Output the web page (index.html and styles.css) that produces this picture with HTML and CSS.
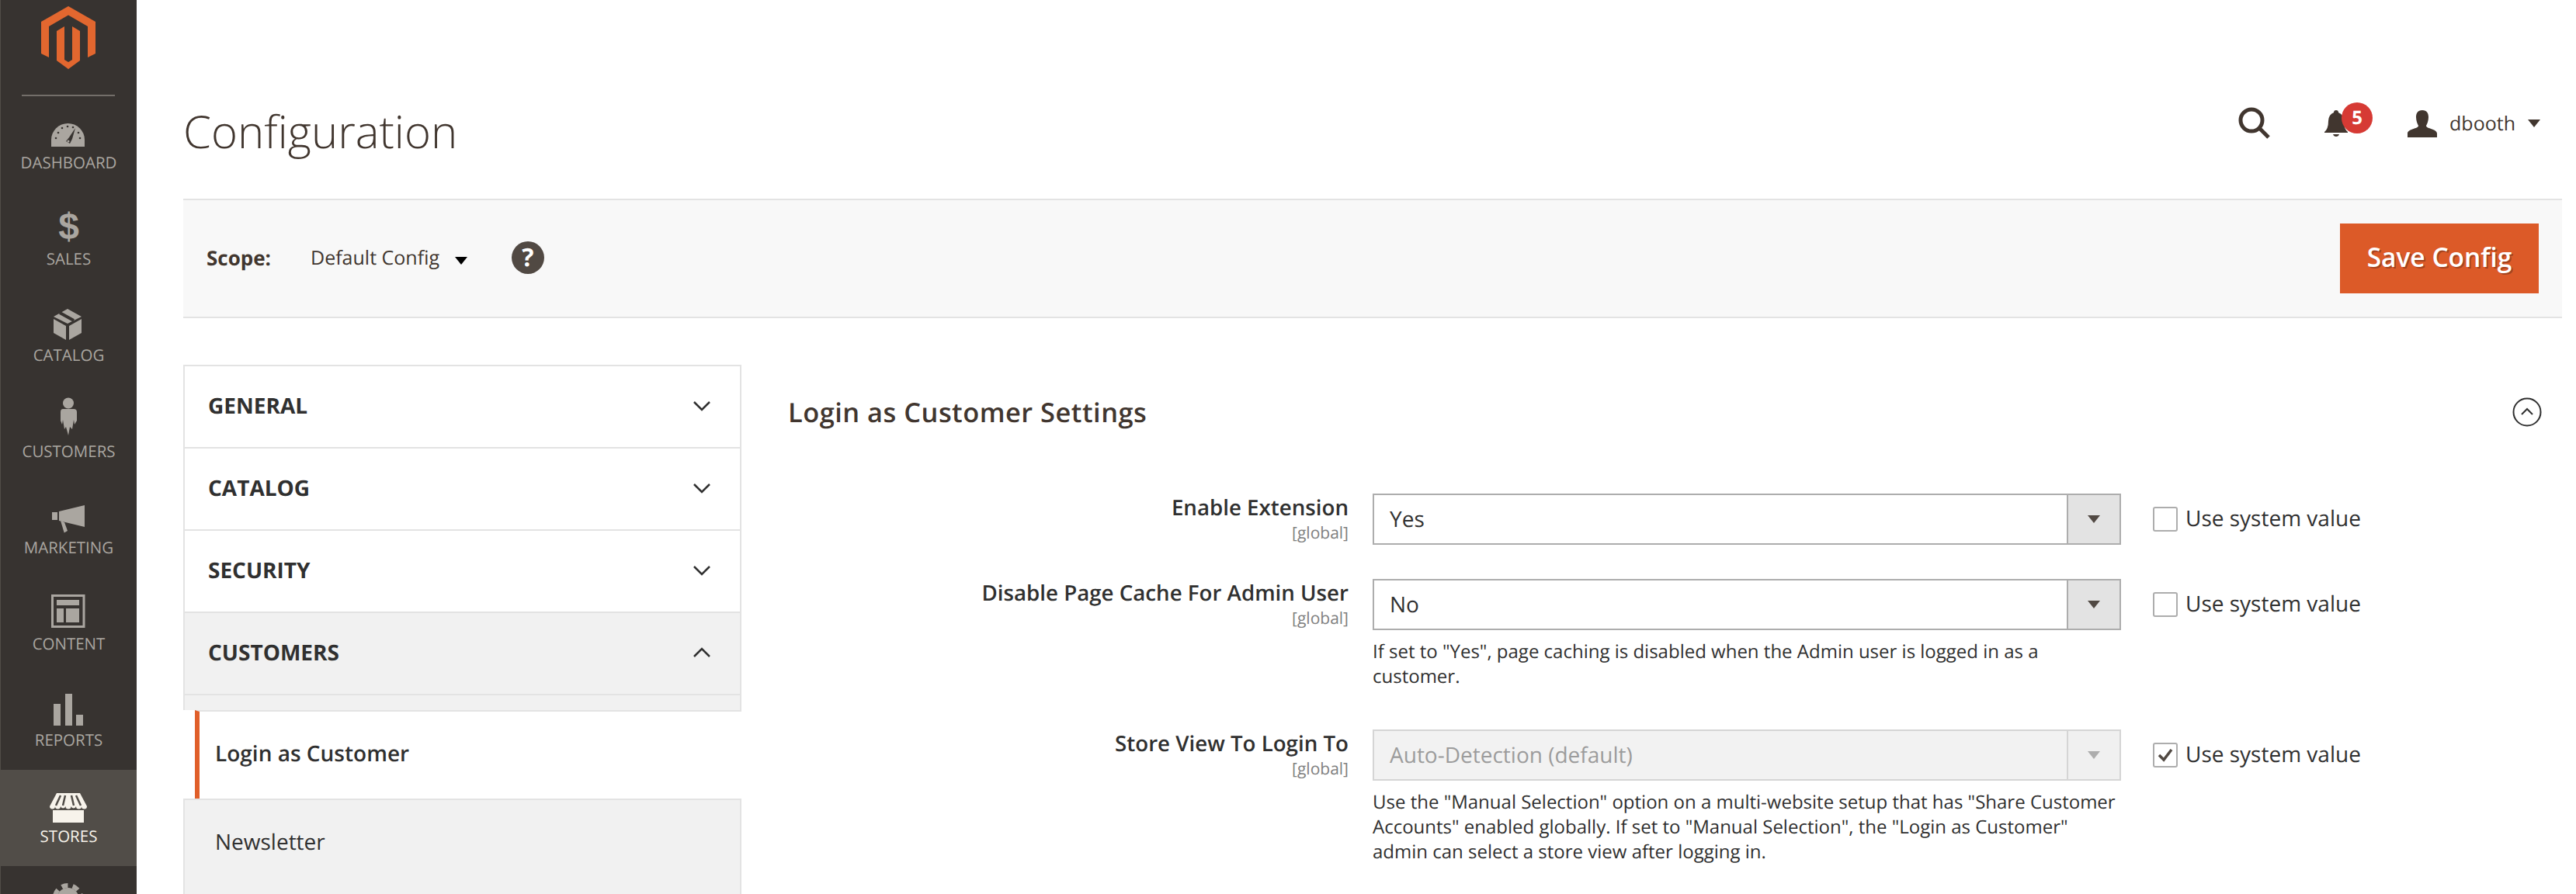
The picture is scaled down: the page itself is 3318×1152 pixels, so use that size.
FILE: index.html
```html
<!DOCTYPE html>
<html lang="en">
<head>
    <meta charset="UTF-8">
    <meta name="viewport" content="width=device-width, initial-scale=1.0">
    <title>Configuration</title>
    <link rel="stylesheet" href="styles.css">
</head>
<body>
    <div class="shell">
        <nav class="sidebar">
            <div class="logo-box">
                <svg class="logo" width="70" height="81" viewBox="0 0 70 81">
                    <path d="M35 0L70 20V61L60 66V26L35 11.5L10 26V66L0 61V20Z"/>
                    <path d="M20 32L30 26V69L35 72L40 69V26L50 32V70L35 81L20 70Z"/>
                </svg>
            </div>
            <a class="nav-item">
                <svg width="48" height="60" viewBox="0 0 48 60">
                    <path d="M2 57V48A21.5 21 0 0 1 45 48V57Z"/>
                    <g class="cut">
                        <circle cx="8" cy="46" r="1.3"/><circle cx="11" cy="39" r="1.3"/><circle cx="16" cy="33" r="1.3"/>
                        <circle cx="23" cy="31" r="1.3"/><circle cx="30" cy="32" r="1.3"/><circle cx="39" cy="46" r="1.3"/><circle cx="37" cy="39" r="1.3"/>
                        <path d="M33 33L25 45L21 50L26 53L29 47Z"/>
                    </g>
                    <circle cx="24" cy="50" r="1.5"/>
                </svg>
                <span>Dashboard</span>
            </a>
            <a class="nav-item">
                <b class="dollar">$</b>
                <span>Sales</span>
            </a>
            <a class="nav-item">
                <svg width="48" height="60" viewBox="0 0 48 60">
                    <path d="M23 18L41 28L23 37L5 28Z"/>
                    <path class="cut-line" d="M13 23L31 33"/>
                    <path d="M5 31L21 40V58L5 49Z"/>
                    <path d="M25 40L41 31V49L25 58Z"/>
                </svg>
                <span>Catalog</span>
            </a>
            <a class="nav-item">
                <svg width="48" height="60" viewBox="0 0 48 60">
                    <circle cx="24" cy="15.5" r="7"/>
                    <path d="M17 23H31Q35 23 35 27V38L32 43L31 37L29 49L26 46L24 57L21 46L19 49L17 37L16 43L14 38V27Q14 23 17 23Z"/>
                </svg>
                <span>Customers</span>
            </a>
            <a class="nav-item">
                <svg width="48" height="60" viewBox="0 0 48 60">
                    <path d="M3 32H10V42H3Z"/>
                    <path d="M12 31L45 23V51L12 43Z"/>
                    <path d="M14 43L19 45L23 56L18.7 58.5Z"/>
                </svg>
                <span>Marketing</span>
            </a>
            <a class="nav-item">
                <svg width="48" height="60" viewBox="0 0 48 60">
                    <path class="frame" d="M3.5 15.5H44V55.5H3.5Z"/>
                    <path d="M9 21H38V28H9Z"/>
                    <path d="M9 32H18V50H9Z"/>
                    <path d="M21 32H38V50H21Z"/>
                </svg>
                <span>Content</span>
            </a>
            <a class="nav-item">
                <svg width="48" height="60" viewBox="0 0 48 60">
                    <path d="M5 31H14V59H5Z"/>
                    <path d="M20 18H29V59H20Z"/>
                    <path d="M34 45H43V59H34Z"/>
                </svg>
                <span>Reports</span>
            </a>
            <a class="nav-item active">
                <svg width="48" height="60" viewBox="0 0 48 60">
                    <path d="M4 44H44V61H4Z"/>
                    <path d="M9 22H39L48 39A3.4 3.4 0 0 1 41 39A3.4 3.4 0 0 1 34 39A3.4 3.4 0 0 1 27.500 39A3.400 3.400 0 0 1 20.500 39A3.400 3.400 0 0 1 14 39A3.400 3.400 0 0 1 7 39A3.400 3.400 0 0 1 0 39Z"/>
                    <path class="store-line" d="M14 25L8 38M20 25L17 38M28 25L31 38M34 25L40 38"/>
                </svg>
                <span>Stores</span>
            </a>
            <a class="nav-item">
                <svg width="48" height="60" viewBox="0 0 48 60">
                    <circle class="gear" cx="23.500" cy="34" r="14"/>
                    <circle class="gear-teeth" cx="23.500" cy="34" r="17"/>
                </svg>
            </a>
        </nav>

        <main class="page">
            <header class="page-header">
                <h1>Configuration</h1>
                <div class="actions">
                    <svg class="search-icon" width="42" height="42" viewBox="0 0 42 42">
                        <circle cx="17" cy="17" r="14"/>
                        <path d="M27 27L39 39"/>
                    </svg>
                    <div class="bell">
                        <svg width="30" height="34" viewBox="0 0 30 34">
                            <path d="M15 0Q18 0 18 3Q25 6 25 14Q25 24 30 28V29H0V28Q5 24 5 14Q5 6 12 3Q12 0 15 0Z"/>
                            <path d="M11 31H19Q18 34 15 34Q12 34 11 31Z"/>
                        </svg>
                        <span class="badge">5</span>
                    </div>
                    <svg class="user-icon" width="38" height="35" viewBox="0 0 38 35">
                        <path d="M19 0C25 0 27 4 27 9C27 14 25 18 24 20C24 24 38 24 38 30V35H0V30C0 24 14 24 14 20C13 18 11 14 11 9C11 4 13 0 19 0Z"/>
                    </svg>
                    <span class="username">dbooth</span>
                    <i class="caret dark"></i>
                </div>
            </header>

            <div class="toolbar">
                <b class="scope-label">Scope:</b>
                <span class="scope-value">Default Config</span>
                <i class="caret black"></i>
                <span class="help">?</span>
                <button class="save">Save Config</button>
            </div>

            <div class="columns">
                <aside class="tabs">
                    <div class="tab">General <svg class="chev" width="24" height="14" viewBox="0 0 24 14"><path d="M2 2L12 12L22 2"/></svg></div>
                    <div class="tab">Catalog <svg class="chev" width="24" height="14" viewBox="0 0 24 14"><path d="M2 2L12 12L22 2"/></svg></div>
                    <div class="tab">Security <svg class="chev" width="24" height="14" viewBox="0 0 24 14"><path d="M2 2L12 12L22 2"/></svg></div>
                    <div class="tab open">Customers <svg class="chev" width="24" height="14" viewBox="0 0 24 14"><path d="M2 12L12 2L22 12"/></svg></div>
                    <div class="tab-gap"></div>
                    <div class="sub-tab current">Login as Customer</div>
                    <div class="sub-tab">Newsletter</div>
                </aside>

                <section class="settings">
                    <div class="section-head">
                        <h2>Login as Customer Settings</h2>
                        <svg class="collapse" width="38" height="38" viewBox="0 0 38 38">
                            <circle cx="19" cy="19" r="17.500"/>
                            <path d="M12 22L19 15L26 22"/>
                        </svg>
                    </div>

                    <div class="form-row">
                        <div class="label">Enable Extension<small>[global]</small></div>
                        <div class="field">
                            <div class="select"><span>Yes</span><em><i></i></em></div>
                        </div>
                        <label class="use-system"><i class="check"></i>Use system value</label>
                    </div>

                    <div class="form-row">
                        <div class="label">Disable Page Cache For Admin User<small>[global]</small></div>
                        <div class="field">
                            <div class="select"><span>No</span><em><i></i></em></div>
                            <p class="note">If set to "Yes", page caching is disabled when the Admin user is logged in as a<br>customer.</p>
                        </div>
                        <label class="use-system"><i class="check"></i>Use system value</label>
                    </div>

                    <div class="form-row">
                        <div class="label">Store View To Login To<small>[global]</small></div>
                        <div class="field">
                            <div class="select disabled"><span>Auto-Detection (default)</span><em><i></i></em></div>
                            <p class="note">Use the "Manual Selection" option on a multi-website setup that has "Share Customer<br>Accounts" enabled globally. If set to "Manual Selection", the "Login as Customer"<br>admin can select a store view after logging in.</p>
                        </div>
                        <label class="use-system">
                            <i class="check"><svg width="22" height="20" viewBox="0 0 22 20"><path d="M3 10L9 16L19 3"/></svg></i>Use system value
                        </label>
                    </div>
                </section>
            </div>
        </main>
    </div>
</body>
</html>
```

FILE: styles.css
```css
html, body {
    margin: 0;
    height: 1152px;
    overflow: hidden;
    background: #fff;
    font-family: "Open Sans", sans-serif;
    color: #303030;
    text-rendering: geometricPrecision;
}
.shell {
    display: flex;
    height: 1152px;
    overflow: hidden;
}

/* left menu */
.sidebar {
    width: 176px;
    flex: none;
    background: #373330;
    color: #aaa6a0;
    box-sizing: border-box;
    height: 1240px;
    border-left: 1px solid #514d48;
}
.logo-box {
    height: 124px;
    margin: 0 28px 0 27px;
    box-sizing: border-box;
    padding-top: 8px;
    border-bottom: 2px solid #736e69;
    display: flex;
    justify-content: center;
}
.logo {
    fill: #e2672f;
    flex: none;
}
.nav-item {
    display: block;
    height: 124px;
    padding-top: 8px;
    box-sizing: border-box;
    text-align: center;
    font-size: 20.5px;
    line-height: 28px;
    text-transform: uppercase;
}
.nav-item svg {
    display: block;
    margin: 0 0 4px 63px;
    fill: #aaa6a0;
}
.nav-item span {
    display: block;
}
.nav-item.active {
    background: #514d48;
    color: #f7f3eb;
}
.nav-item.active svg {
    fill: #f7f3eb;
}
.cut {
    fill: #373330;
}
.cut-line {
    stroke: #373330;
    stroke-width: 4;
    fill: none;
}
.frame {
    fill: none;
    stroke: #aaa6a0;
    stroke-width: 3;
}
.store-line {
    fill: none;
    stroke: #514d48;
    stroke-width: 2.500;
}
.dollar {
    display: block;
    height: 60px;
    margin-bottom: 4px;
    box-sizing: border-box;
    padding-top: 14px;
    font-family: "Liberation Sans", sans-serif;
    font-weight: 700;
    font-size: 48px;
    line-height: 46px;
}
.gear {
    fill: #aaa6a0;
}
.gear-teeth {
    fill: none;
    stroke: #aaa6a0;
    stroke-width: 6;
    stroke-dasharray: 8 6.300;
}

/* page */
.page {
    flex: 1;
    min-width: 0;
    padding: 0 18px 0 60px;
}
.page-header {
    height: 256px;
    box-sizing: border-box;
    padding: 80px 0 0;
    display: flex;
    align-items: center;
    justify-content: space-between;
}
h1 {
    margin: 0;
    font-size: 58px;
    font-weight: 300;
    color: #41362f;
}
.actions {
    display: flex;
    align-items: center;
    margin: 0 28px 18px 0;
    color: #41362f;
}
.search-icon {
    fill: none;
    stroke: #41362f;
    stroke-width: 5;
    margin-right: 69px;
}
.bell {
    position: relative;
    width: 30px;
    height: 34px;
    margin-right: 77px;
    fill: #41362f;
}
.bell svg {
    display: block;
}
.badge {
    position: absolute;
    left: 22px;
    top: -10px;
    width: 40px;
    height: 40px;
    border-radius: 50%;
    background: #d63a34;
    color: #fff;
    font-size: 24px;
    font-weight: 700;
    line-height: 40px;
    text-align: center;
}
.user-icon {
    fill: #41362f;
    margin-right: 16px;
}
.username {
    font-size: 25px;
    margin-right: 16px;
}
.caret {
    display: block;
    border-style: solid;
    border-width: 10px 8px 0;
    border-color: #41362f transparent transparent;
}
.caret.black {
    border-color: #000 transparent transparent;
    margin-top: 6px;
}

/* scope bar */
.toolbar {
    height: 154px;
    box-sizing: border-box;
    padding: 0 30px;
    background: #f8f8f8;
    border-top: 2px solid #e3e3e3;
    border-bottom: 2px solid #e3e3e3;
    display: flex;
    align-items: center;
    font-size: 25px;
    color: #41362f;
}
.scope-label {
    font-size: 26px;
    font-weight: 700;
    margin-right: 51px;
    padding-bottom: 2px;
}
.scope-value {
    margin-right: 20px;
    padding-bottom: 2px;
}
.help {
    width: 42px;
    height: 42px;
    border-radius: 50%;
    background: #514943;
    color: #fff;
    margin: 0 0 2px 57px;
    font-size: 32px;
    font-weight: 700;
    line-height: 42px;
    text-align: center;
}
.save {
    margin-left: auto;
    width: 256px;
    height: 90px;
    padding: 0 0 4px;
    border: none;
    background: #dc5a28;
    color: #fff;
    font-family: inherit;
    font-size: 33.500px;
    font-weight: 600;
    text-shadow: 2px 2px 0 rgba(0, 0, 0, 0.25);
}

/* columns */
.columns {
    display: flex;
    margin-top: 60px;
}
.tabs {
    width: 719px;
    flex: none;
    margin-right: 60px;
    color: #303030;
}
.tab {
    height: 106px;
    box-sizing: border-box;
    padding: 0 37px 2px 30px;
    border: 2px solid #e3e3e3;
    border-bottom: none;
    display: flex;
    align-items: center;
    justify-content: space-between;
    font-size: 28px;
    font-weight: 700;
    text-transform: uppercase;
}
.tab.open {
    background: #f1f1f1;
}
.chev {
    fill: none;
    stroke: #303030;
    stroke-width: 2.500;
}
.tab-gap {
    height: 19px;
    background: #f1f1f1;
    border: 2px solid #e3e3e3;
    border-bottom: none;
}
.sub-tab {
    height: 160px;
    box-sizing: border-box;
    padding: 0 0 50px 39px;
    background: #f1f1f1;
    border: 2px solid #e3e3e3;
    border-width: 2px 2px 0;
    display: flex;
    align-items: center;
    font-size: 28px;
}
.sub-tab.current {
    height: 114px;
    margin-left: 15px;
    padding: 0 0 4px 20px;
    background: #fff;
    border-left: 6px solid #e05f2a;
    border-right: none;
    font-weight: 600;
}

/* form */
.settings {
    flex: 1;
    min-width: 0;
}
.section-head {
    height: 122px;
    display: flex;
    align-items: center;
    justify-content: space-between;
    margin-bottom: 44px;
    padding-right: 26px;
}
h2 {
    margin: 0;
    font-size: 34.400px;
    font-weight: 600;
    letter-spacing: 0.5px;
    color: #41362f;
}
.collapse {
    fill: none;
    stroke: #303030;
    stroke-width: 2;
}
.form-row {
    display: flex;
    align-items: flex-start;
    margin-bottom: 44px;
}
.label {
    width: 722px;
    flex: none;
    box-sizing: border-box;
    padding-top: 3px;
    text-align: right;
    font-size: 27.700px;
    line-height: 30px;
    font-weight: 600;
}
.label small {
    display: block;
    margin-top: 4px;
    font-size: 21px;
    line-height: 28px;
    font-weight: 400;
    color: #808080;
}
.field {
    width: 964px;
    flex: none;
    margin: 0 41px 0 31px;
}
.select {
    height: 66px;
    box-sizing: border-box;
    border: 2px solid #adadad;
    display: flex;
    align-items: center;
    justify-content: space-between;
    padding-left: 20px;
    font-size: 28px;
}
.select em {
    width: 68px;
    height: 62px;
    box-sizing: border-box;
    border-left: 2px solid #adadad;
    background: #e3e3e3;
    display: flex;
    align-items: center;
    justify-content: center;
    flex: none;
}
.select i {
    display: block;
    border-style: solid;
    border-width: 10px 8px 0;
    border-color: #514943 transparent transparent;
}
.select.disabled {
    background: #f2f2f2;
    border-color: #d5d5d5;
    color: #9c9c9c;
}
.select.disabled em {
    background: #f0f0f0;
    border-left-color: #d5d5d5;
}
.select.disabled i {
    border-top-color: #adadad;
}
.note {
    margin: 12px 0 8px;
    font-size: 24px;
    line-height: 32px;
    color: #303030;
}
.use-system {
    display: flex;
    align-items: center;
    height: 66px;
    padding-bottom: 2px;
    box-sizing: border-box;
    font-size: 28px;
    white-space: nowrap;
}
.check {
    width: 32px;
    height: 32px;
    margin: 2px 10px 0 0;
    box-sizing: border-box;
    border: 2px solid #adadad;
    border-radius: 3px;
    display: flex;
    align-items: center;
    justify-content: center;
}
.check svg {
    fill: none;
    stroke: #514943;
    stroke-width: 3.500;
}
```
